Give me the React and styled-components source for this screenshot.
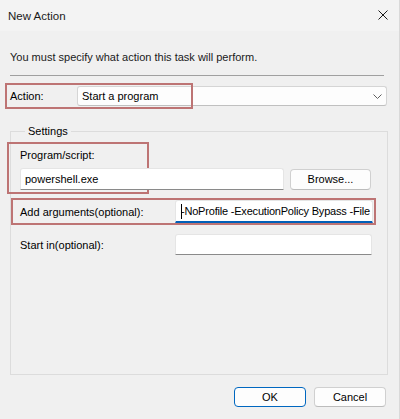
import React from "react";
import styled, { createGlobalStyle } from "styled-components";

const GlobalStyle = createGlobalStyle`
  html, body {
    margin: 0;
    padding: 0;
    background: #f0f0f0;
  }
  body {
    font-family: "Liberation Sans", "Noto Sans", Arial, sans-serif;
    font-size: 11px;
    color: #000;
  }
`

const Window = styled.div`
  width: 400px;
  height: 419px;
  box-sizing: border-box;
  display: flex;
  flex-direction: column;
  background: #f0f0f0;
  border-right: 1px solid #d9d9d9;
  overflow: hidden;
`
const TitleBar = styled.div`
  height: 31px;
  flex: none;
  display: flex;
  align-items: center;
  justify-content: space-between;
  padding: 0 11px 0 8px;
  background: #f3f3f3;
  color: #1a1a1a;
  font-size: 11.5px;
`
const CloseX = styled.svg`
  width: 10px;
  height: 10px;
  margin-top: -1px;
`
const Body = styled.div`
  flex: 1;
  display: flex;
  flex-direction: column;
  padding: 0 12px 0 10px;
`
const Intro = styled.p`
  margin: 18px 0 0;
  line-height: 16px;
  color: #1a1a1a;
`
const Separator = styled.div`
  height: 1px;
  margin: 10px 3px 0 0;
  background: #a0a0a0;
`
const Row = styled.div`
  position: relative;
  display: flex;
  align-items: center;
  margin-top: ${p => p.$top || 0}px;
`
const Label = styled.span`
  width: ${p => p.$w ? p.$w + "px" : "auto"};
  flex: none;
  line-height: 16px;
`
const Highlight = styled.div`
  position: absolute;
  left: ${p => p.$l}px;
  top: ${p => p.$t}px;
  width: ${p => p.$w}px;
  height: ${p => p.$h}px;
  border: 2px solid #bd7474;
  box-sizing: border-box;
  pointer-events: none;
`
const Combo = styled.div`
  flex: 1;
  height: 20px;
  box-sizing: border-box;
  display: flex;
  align-items: center;
  justify-content: space-between;
  padding: 0 4px 0 4px;
  background: #fdfdfd;
  border: 1px solid #d5d5d5;
  border-bottom-color: #c0c0c0;
  border-radius: 3px;
`
const Group = styled.fieldset`
  margin: 17px 0 0;
  padding: 8px 14px 0 9px;
  height: 252px;
  box-sizing: border-box;
  border: 1px solid #dcdcdc;
  border-radius: 0;
  display: flex;
  flex-direction: column;
  position: relative;
`
const Legend = styled.legend`
  padding: 0 3px;
  margin-left: 5px;
  line-height: 16px;
`
const FieldSection = styled.div`
  position: relative;
  display: flex;
  flex-direction: column;
`
const Field = styled.div`
  width: ${p => p.$w}px;
  height: ${p => p.$h || 21}px;
  box-sizing: border-box;
  display: flex;
  align-items: center;
  padding-left: ${p => p.$pl ?? 4}px;
  background: #fff;
  border: 1px solid #e5e5e5;
  border-bottom: ${p => p.$focus ? "2px solid #005fb8" : "1px solid #8a8a8a"};
  border-radius: 3px 3px 0 0;
  white-space: nowrap;
  overflow: hidden;
  letter-spacing: ${p => p.$tight ? "-0.2px" : "normal"};
`
const Caret = styled.span`
  display: inline-block;
  flex: none;
  width: 1px;
  height: 15px;
  background: #000;
  margin-right: -1px;
`
const Button = styled.button`
  width: ${p => p.$w}px;
  height: ${p => p.$h || 21}px;
  box-sizing: border-box;
  font: inherit;
  color: #000;
  padding: 0;
  background: #fdfdfd;
  border: 1px solid ${p => p.$primary ? "#0067c0" : "#d0d0d0"};
  border-bottom-color: ${p => p.$primary ? "#0067c0" : "#bcbcbc"};
  border-radius: 4px;
  margin-left: ${p => p.$ml || 0}px;
`
const Footer = styled.div`
  display: flex;
  justify-content: flex-end;
  padding: 12px 1px 0 0;
  gap: 8px;
`

function App() {
  return (
    <>
      <GlobalStyle />
      <Window>
        <TitleBar>
          <span>New Action</span>
          <CloseX viewBox="0 0 10 10">
            <path d="M0.5 0.5 L9.5 9.5 M9.5 0.5 L0.5 9.5" stroke="#1a1a1a" strokeWidth="1" fill="none" />
          </CloseX>
        </TitleBar>
        <Body>
          <Intro>You must specify what action this task will perform.</Intro>
          <Separator />
          <Row $top={10}>
            <Highlight $l={-5} $t={-3} $w={188} $h={26} />
            <Label $w={67}>Action:</Label>
            <Combo>
              <span>Start a program</span>
              <svg width="9" height="5" viewBox="0 0 9 5">
                <path d="M0.5 0.5 L4.5 4.5 L8.5 0.5" stroke="#606060" strokeWidth="1" fill="none" />
              </svg>
            </Combo>
          </Row>
          <Group>
            <Legend>Settings</Legend>
            <FieldSection>
              <Highlight $l={-13} $t={-5} $w={142} $h={52} />
              <Label>Program/script:</Label>
              <Row $top={5}>
                <Field $w={264} $h={22}>powershell.exe</Field>
                <Button $w={81} $ml={6}>Browse...</Button>
              </Row>
            </FieldSection>
            <Row $top={10}>
              <Highlight $l={-9} $t={-2} $w={365} $h={27} />
              <Label $w={155}>Add arguments(optional):</Label>
              <Field $w={198} $h={23} $pl={5} $focus $tight>
                <Caret />-NoProfile -ExecutionPolicy Bypass -File
              </Field>
            </Row>
            <Row $top={11}>
              <Label $w={155}>Start in(optional):</Label>
              <Field $w={197} $h={21} />
            </Row>
          </Group>
          <Footer>
            <Button $w={72} $h={20} $primary>OK</Button>
            <Button $w={72} $h={20}>Cancel</Button>
          </Footer>
        </Body>
      </Window>
    </>
  );
}

export default App;
